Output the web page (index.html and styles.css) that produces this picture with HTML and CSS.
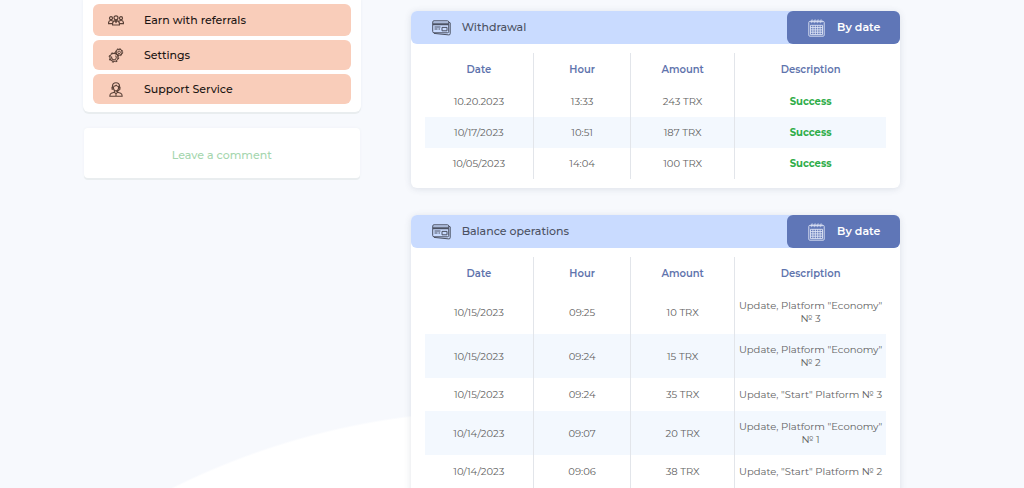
FILE: index.html
```
<!DOCTYPE html>
<html lang="en">
<head>
<meta charset="utf-8">
<meta name="viewport" content="width=device-width, initial-scale=1">
<title>Account operations</title>
<link rel="stylesheet" href="styles.css">
</head>
<body>
<svg class="symbols" aria-hidden="true">
  <symbol id="icon-card" viewBox="0 0 19 16">
    <g fill="none" stroke="currentColor" stroke-width="1" stroke-linejoin="round">
      <rect x="0.7" y="0.8" width="16" height="12" rx="1.3"/>
      <path d="M1 3.2h15.6M1 4.6h15.6" stroke-width="1.1"/>
      <path d="M2.5 7h6M2.5 9h3M6.5 9h1.5"/>
      <rect x="10" y="7.4" width="5" height="3.4"/>
      <path d="M17 2.2l1.2.6v10.8q0 1.4-1.4 1.3L2 13.4"/>
    </g>
  </symbol>
  <symbol id="icon-calendar" viewBox="0 0 17 18">
    <g fill="none" stroke="currentColor">
      <rect x="0.8" y="2.4" width="15.4" height="14.8" rx="1" stroke-width="0.9"/>
      <path d="M3.3 4.2V1.6a.8.8 0 0 1 1.6 0v2M6.3 4.2V1.6a.8.8 0 0 1 1.6 0v2M9.3 4.2V1.6a.8.8 0 0 1 1.6 0v2M12.3 4.2V1.6a.8.8 0 0 1 1.6 0v2" stroke-width="0.8"/>
      <path d="M2.5 6.3h12v9.3h-12zM2.5 8.6h12M2.5 10.9h12M2.5 13.2h12M4.9 6.3v9.3M7.3 6.3v9.3M9.7 6.3v9.3M12.1 6.3v9.3" stroke-width="0.9"/>
    </g>
  </symbol>
  <symbol id="icon-people" viewBox="0 0 16 11">
    <g fill="none" stroke="currentColor" stroke-width="1.2">
      <circle cx="8" cy="2.8" r="2"/>
      <circle cx="3" cy="3.2" r="1.5"/>
      <circle cx="13" cy="3.2" r="1.5"/>
      <path d="M4.6 10V8.2Q4.8 5.7 8 5.7t3.4 2.5V10z"/>
      <path d="M4.4 8.6H.6V7.4Q.9 5.5 3 5.5q1.2 0 1.9.6M11.6 8.6h3.8V7.4q-.3-1.9-2.4-1.9-1.2 0-1.9.6M7 6l1 1.4L9 6"/>
    </g>
  </symbol>
  <symbol id="icon-gears" viewBox="0 0 16 16">
    <g fill="none" stroke="currentColor">
      <circle cx="5.8" cy="10" r="4.3" stroke-width="1.2"/>
      <circle cx="5.8" cy="10" r="5.1" stroke-width="1.1" stroke-dasharray="2 2.005"/>
      <path d="M3.5 9.1a2.5 2.5 0 1 0 3.9-1" stroke-width="1.1"/>
      <circle cx="11.3" cy="4.6" r="3.2" stroke-width="1.1"/>
      <circle cx="11.3" cy="4.6" r="3.9" stroke-width="1" stroke-dasharray="1.5 1.563"/>
      <circle cx="11.3" cy="4.6" r="1.4" stroke-width="1"/>
    </g>
  </symbol>
  <symbol id="icon-support" viewBox="0 0 14 15">
    <g fill="none" stroke="currentColor" stroke-width="1.1" stroke-linejoin="round">
      <path d="M3.4 6.6V4.4Q3.6.7 7 .7t3.6 3.7v2.2"/>
      <path d="M4.5 4.4v2Q4.9 9 7 9t2.5-2.6v-2Q8.2 4.6 7.3 3.2 6.2 4.4 4.5 4.4"/>
      <path d="M3.1 4.9v2.4h1.2M10.9 4.9v2.4L8.6 9.2H7"/>
      <path d="M5.4 8.8v1.4L2.3 11.2Q.9 11.8.8 14.2h12.4q-.1-2.4-1.5-3L8.6 10.2V8.8M5.4 10.2L7 12l1.6-1.8M7 12v2.2"/>
    </g>
  </symbol>
</svg>

<div class="page">
  <aside class="sidebar">
    <nav class="menu">
      <a class="menu-item menu-item-large" href="#referrals">
        <span class="menu-icon"><svg class="icon"><use href="#icon-people"/></svg></span>
        <span class="menu-label">Earn with referrals</span>
      </a>
      <a class="menu-item" href="#settings">
        <span class="menu-icon"><svg class="icon"><use href="#icon-gears"/></svg></span>
        <span class="menu-label">Settings</span>
      </a>
      <a class="menu-item" href="#support">
        <span class="menu-icon"><svg class="icon"><use href="#icon-support"/></svg></span>
        <span class="menu-label">Support Service</span>
      </a>
    </nav>
    <a class="comment" href="#comment">Leave a comment</a>
  </aside>

  <main class="content">
    <section class="card">
      <header class="card-head">
        <svg class="card-icon"><use href="#icon-card"/></svg>
        <h2 class="card-title">Withdrawal</h2>
        <button class="sort" type="button"><svg class="sort-icon"><use href="#icon-calendar"/></svg>By date</button>
      </header>
      <table class="table">
        <colgroup><col class="col-date"><col class="col-hour"><col class="col-amount"><col></colgroup>
        <thead><tr><th scope="col">Date</th><th scope="col">Hour</th><th scope="col">Amount</th><th scope="col">Description</th></tr></thead>
        <tbody>
          <tr><td>10.20.2023</td><td>13:33</td><td>243 TRX</td><td class="success">Success</td></tr>
          <tr><td>10/17/2023</td><td>10:51</td><td>187 TRX</td><td class="success">Success</td></tr>
          <tr><td>10/05/2023</td><td>14:04</td><td>100 TRX</td><td class="success">Success</td></tr>
        </tbody>
      </table>
    </section>

    <section class="card">
      <header class="card-head">
        <svg class="card-icon"><use href="#icon-card"/></svg>
        <h2 class="card-title">Balance operations</h2>
        <button class="sort" type="button"><svg class="sort-icon"><use href="#icon-calendar"/></svg>By date</button>
      </header>
      <table class="table table-roomy">
        <colgroup><col class="col-date"><col class="col-hour"><col class="col-amount"><col></colgroup>
        <thead><tr><th scope="col">Date</th><th scope="col">Hour</th><th scope="col">Amount</th><th scope="col">Description</th></tr></thead>
        <tbody>
          <tr><td>10/15/2023</td><td>09:25</td><td>10 TRX</td><td>Update, Platform "Economy" № 3</td></tr>
          <tr><td>10/15/2023</td><td>09:24</td><td>15 TRX</td><td>Update, Platform "Economy" № 2</td></tr>
          <tr><td>10/15/2023</td><td>09:24</td><td>35 TRX</td><td>Update, "Start" Platform № 3</td></tr>
          <tr><td>10/14/2023</td><td>09:07</td><td>20 TRX</td><td>Update, Platform "Economy" № 1</td></tr>
          <tr><td>10/14/2023</td><td>09:06</td><td>38 TRX</td><td>Update, "Start" Platform № 2</td></tr>
        </tbody>
      </table>
    </section>
  </main>
</div>
</body>
</html>
```

FILE: styles.css
```
* { box-sizing: border-box; }

body {
  height: 100vh;
  margin: 0;
  overflow: hidden;
  background: radial-gradient(circle at 500px 1146px, #fff 734px, #f7f9fd 736px);
  color: #626262;
  font-family: Montserrat, Inter, "Open Sans", sans-serif;
  font-size: 11px;
  line-height: 13px;
}

.symbols { display: none; }

.page {
  display: grid;
  grid-template-columns: 278fr 490fr;
  gap: 50px;
  align-items: start;
  padding: 0 12.1% 0 8.1%;
}

.sidebar {
  display: flex;
  flex-direction: column;
  gap: 16px;
}

.menu {
  display: flex;
  flex-direction: column;
  gap: 4px;
  padding: 4px 10px 8px;
  border-radius: 0 0 6px 6px;
  background: #fff;
  box-shadow: 0 2px 0 #e9edef, 0 0 3px #e9edf2;
}

.menu-item {
  display: flex;
  align-items: center;
  height: 30px;
  border-radius: 6px;
  background: #f9cdba;
  color: #1c1513;
  font-weight: 500;
  text-decoration: none;
}

.menu-item-large { height: 32px; }

.menu-icon {
  display: flex;
  justify-content: center;
  width: 51px;
  padding-right: 4px;
}

.icon {
  width: 16px;
  height: 15px;
  color: #5a4137;
}

.comment {
  margin: 0 1px;
  padding: 21px 0 16px;
  border-radius: 4px;
  background: #fff;
  box-shadow: 0 2px 0 #e9edef, 0 0 3px #eef1f5;
  color: #a5d6ae;
  font-weight: 500;
  text-align: center;
  text-decoration: none;
}

.content {
  display: flex;
  flex-direction: column;
  gap: 27px;
  padding-top: 11px;
}

.card {
  padding-bottom: 9px;
  border-radius: 6px;
  background: #fff;
  box-shadow: 0 1px 7px rgba(60, 70, 100, 0.14);
}

.card-head {
  display: flex;
  align-items: center;
  height: 33px;
  padding-left: 21px;
  border-radius: 6px;
  background: #c9dbff;
  color: #4b5162;
}

.card-icon {
  width: 19px;
  height: 16px;
}

.card-title {
  flex: 1;
  margin: 0 0 0 11px;
  font-size: 11px;
  font-weight: 500;
}

.sort {
  display: flex;
  align-items: center;
  gap: 12px;
  height: 33px;
  width: 113px;
  padding: 0 0 0 21px;
  border: 0;
  border-radius: 6px;
  background: #5f76b7;
  color: #fff;
  font: 600 11px/13px Montserrat, Inter, "Open Sans", sans-serif;
  white-space: nowrap;
}

.sort-icon {
  width: 17px;
  height: 18px;
  color: #dfe5f5;
}

.table {
  width: calc(100% - 28px);
  margin: 9px 14px 0;
  border-collapse: collapse;
  table-layout: fixed;
  text-align: center;
  font-size: 10px;
}

.col-date { width: 109px; }
.col-hour { width: 97px; }
.col-amount { width: 104px; }

.table th {
  height: 33px;
  padding: 0;
  color: #5f74ad;
  font-weight: 600;
}

.table td {
  height: 31px;
  padding: 9px 2px;
}

.table-roomy td { height: 33px; }

.table th + th,
.table td + td { border-left: 1px solid #e2e5ea; }

.table tbody tr:nth-child(even) { background: #f3f8fe; }

.table .success {
  color: #2fad49;
  font-weight: 700;
}
```
